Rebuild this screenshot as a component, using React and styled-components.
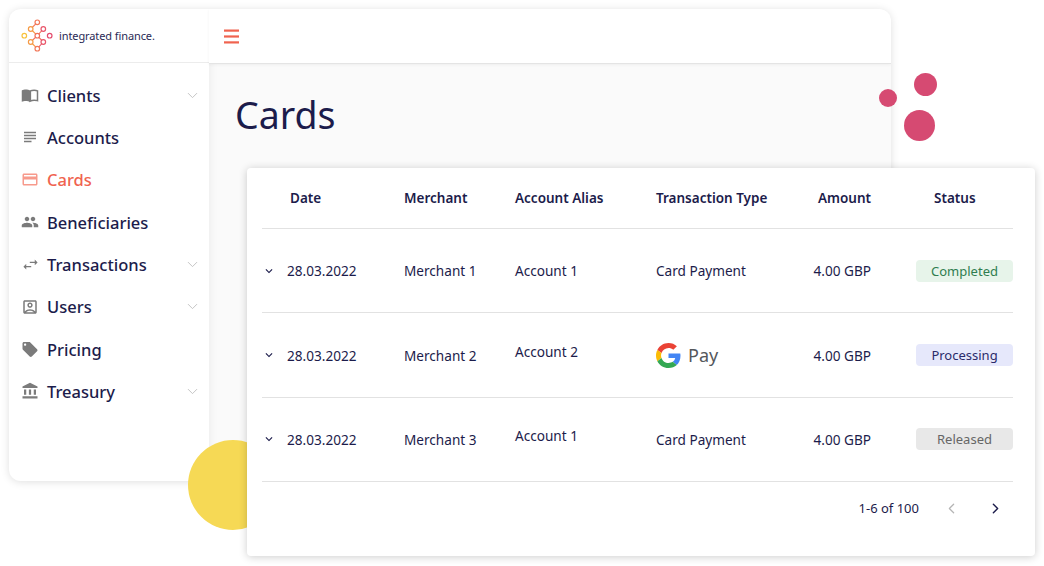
import React from 'react';
import styled, { createGlobalStyle } from 'styled-components';
import {
  MdSubject,
  MdOutlineCreditCard,
  MdPeople,
  MdOutlineAccountBox,
  MdLocalOffer,
  MdAccountBalance,
  MdKeyboardArrowDown,
} from 'react-icons/md';
import { ChevronDown, ChevronLeft, ChevronRight } from 'lucide-react';

const INK = '#1c1c4b';
const CORAL = '#f0634f';

const GlobalStyle = createGlobalStyle`
  html, body {
    margin: 0;
    background: #fff;
    font-family: "Noto Sans", "Open Sans", sans-serif;
    color: ${INK};
  }
`;

const Page = styled.div`
  position: relative;
  width: 1044px;
  height: 566px;
  padding: 9px 0 0 9px;
  box-sizing: border-box;
  overflow: hidden;
`;

const Window = styled.div`
  display: flex;
  isolation: isolate;
  width: 882px;
  height: 472px;
  border-radius: 12px;
  background: #fafafa;
  box-shadow: 0 1px 9px rgba(0, 0, 0, 0.13);
  overflow: hidden;
`;

/* sidebar */
const Sidebar = styled.aside`
  flex: 0 0 200px;
  background: #fff;
  box-shadow: 2px 0 8px rgba(0, 0, 0, 0.05);
`;

const Brand = styled.div`
  display: flex;
  align-items: center;
  gap: 6px;
  height: 53px;
  padding-left: 12px;
  border-bottom: 1px solid #ececec;
`;

const BrandName = styled.span`
  font-size: 11px;
  letter-spacing: -0.1px;
  color: #2a2a55;
`;

const Nav = styled.nav`
  padding-top: 11px;
`;

const NavRow = styled.div`
  display: grid;
  grid-template-columns: 26px 1fr 20px;
  align-items: center;
  height: 42.33px;
  padding: 0 7px 0 12px;
  font-size: 16.5px;
  font-weight: 500;
  color: ${(p) => (p.$active ? CORAL : INK)};
`;

const NavIcon = styled.span`
  display: flex;
  justify-content: center;
  width: 18px;
  color: ${(p) => (p.$active ? '#f79a8c' : '#7b7b7b')};
`;

const NavCaret = styled(ChevronDown)`
  justify-self: center;
  color: #c4c4c4;
`;

/* main area */
const Main = styled.main`
  flex: 1;
  display: flex;
  flex-direction: column;
`;

const TopBar = styled.header`
  display: flex;
  align-items: center;
  height: 54px;
  padding-left: 15px;
  background: #fff;
  border-bottom: 1px solid #e4e4e4;
  box-shadow: 0 1px 3px rgba(0, 0, 0, 0.05);
  color: ${CORAL};
`;

const Title = styled.h1`
  margin: 27px 0 0 26px;
  font-size: 37.5px;
  line-height: 48px;
  font-weight: 400;
  color: ${INK};
`;

/* decoration */
const Dot = styled.div`
  position: absolute;
  left: ${(p) => p.$x}px;
  top: ${(p) => p.$y}px;
  width: ${(p) => p.$d}px;
  height: ${(p) => p.$d}px;
  border-radius: 50%;
  background: ${(p) => p.$color};
`;

/* table card */
const TableCard = styled.section`
  position: absolute;
  left: 247px;
  top: 168px;
  width: 788px;
  height: 388px;
  box-sizing: border-box;
  padding: 0 22px 0 15px;
  background: #fff;
  border-radius: 4px;
  box-shadow: 0 1px 9px rgba(0, 0, 0, 0.2);
`;

const Grid = styled.div`
  display: grid;
  grid-template-columns: 142px 111px 141px 120px 95px 1fr;
  align-items: center;
  height: ${(p) => p.$height}px;
  border-bottom: 1px solid #e2e2e2;
  box-sizing: border-box;
`;

const Head = styled.div`
  font-size: 13.5px;
  font-weight: 600;
  text-align: ${(p) => (p.$right ? 'right' : 'left')};
  padding-left: ${(p) => p.$pad || 0}px;
`;

const Cell = styled.div`
  display: flex;
  align-items: center;
  font-size: 13.6px;
  justify-content: ${(p) => (p.$right ? 'flex-end' : 'flex-start')};
  padding-left: ${(p) => p.$pad || 0}px;
  margin-bottom: ${(p) => (p.$raised ? 8 : 0)}px;
  white-space: nowrap;
`;

const Expander = styled(MdKeyboardArrowDown)`
  flex: 0 0 14px;
  margin-right: 11px;
`;

const PayMark = styled.div`
  display: flex;
  align-items: center;
  gap: 7px;
  font-size: 18px;
  color: #54575c;
`;

const BADGES = {
  Completed: { bg: '#e7f4ea', fg: '#2f7d4f' },
  Processing: { bg: '#e6e8fb', fg: '#2b2b6a' },
  Released: { bg: '#e8e8e8', fg: '#666' },
};

const Badge = styled.span`
  width: 97px;
  height: 22px;
  line-height: 22px;
  border-radius: 4px;
  text-align: center;
  font-size: 13px;
  background: ${(p) => BADGES[p.$status].bg};
  color: ${(p) => BADGES[p.$status].fg};
`;

const Footer = styled.div`
  display: flex;
  justify-content: flex-end;
  align-items: center;
  height: 52px;
  padding-right: 9px;
  font-size: 13px;
`;

const PageInfo = styled.span`
  margin-right: 24px;
`;

const PageButton = styled.span`
  display: flex;
  margin-left: ${(p) => p.$gap || 0}px;
  color: ${(p) => (p.$disabled ? '#b5b5b5' : INK)};
`;

const Logo = () => {
  const nodes = [
    [24.3, 35.7, '#f8c23c'],
    [30.7, 29, '#f59a45'],
    [37.3, 22.3, '#f2795a'],
    [43.3, 29, '#e9566a'],
    [37.3, 35.7, '#f0705a'],
    [49.7, 35.7, '#e44d6e'],
    [30.7, 42, '#f59a45'],
    [43.3, 42, '#e9566a'],
    [37.3, 48.7, '#f2795a'],
  ];
  const links = [
    [2, 1], [1, 4], [4, 3], [4, 7], [4, 6], [6, 8], [7, 8],
  ];
  return (
    <svg width="32" height="33" viewBox="21 19 32 33">
      {links.map(([a, b]) => (
        <line
          key={`${a}-${b}`}
          x1={nodes[a][0]}
          y1={nodes[a][1]}
          x2={nodes[b][0]}
          y2={nodes[b][1]}
          stroke={nodes[a][2]}
          strokeWidth="1.1"
        />
      ))}
      {nodes.map(([x, y, c]) => (
        <circle key={`${x}-${y}`} cx={x} cy={y} r="2.3" fill="#fff" stroke={c} strokeWidth="1.2" />
      ))}
    </svg>
  );
};

const GoogleG = () => (
  <svg width="25" height="25" viewBox="0 0 48 48">
    <path fill="#EA4335" d="M24 9.5c3.5 0 6.7 1.2 9.2 3.6l6.9-6.9C35.9 2.4 30.5 0 24 0 14.6 0 6.5 5.4 2.6 13.2l8 6.2C12.5 13.6 17.8 9.5 24 9.5z" />
    <path fill="#4285F4" d="M47 24.5c0-1.6-.1-3.100-.4-4.500H24v9h12.900c-.6 3-2.200 5.500-4.700 7.200l7.700 6c4.500-4.200 7.100-10.300 7.100-17.700z" />
    <path fill="#FBBC05" d="M10.500 28.600c-.5-1.500-.8-3-.8-4.600s.3-3.100.8-4.600l-8-6.200C.9 16.400 0 20.100 0 24s.9 7.600 2.600 10.800l7.900-6.200z" />
    <path fill="#34A853" d="M24 48c6.500 0 11.900-2.100 15.900-5.800l-7.700-6c-2.200 1.400-4.900 2.300-8.200 2.300-6.200 0-11.500-4.100-13.400-9.900l-8 6.200C6.500 42.600 14.600 48 24 48z" />
  </svg>
);

const BookIcon = ({ size }) => (
  <svg width={size} height={size} viewBox="0 0 24 24">
    <path fill="currentColor" d="M12 6C10.500 4.900 8.500 4.500 6.500 4.500S2.500 4.900 1 6v15c1.500-.8 3.500-1 5.500-1s4 .4 5.500 1.500z" />
    <path fill="none" stroke="currentColor" strokeWidth="2" d="M12.500 6.500c1.500-.8 3.200-1 5-1s3.200.2 4.500.9V19.500c-1.300-.5-2.800-.6-4.500-.6s-3.500.3-5 1.100z" />
  </svg>
);

const ArrowsIcon = ({ size }) => (
  <svg width={size} height={size} viewBox="0 0 24 24" fill="currentColor">
    <path d="M11 8h7V5l4 4-4 4v-3h-7z" />
    <path d="M13 16H6v3l-4-4 4-4v3h7z" />
  </svg>
);

const BurgerIcon = () => (
  <svg width="15" height="15" viewBox="0 0 15 15" fill="currentColor">
    <rect y="0.5" width="15" height="2.2" />
    <rect y="6.4" width="15" height="2.2" />
    <rect y="12.3" width="15" height="2.2" />
  </svg>
);

const navItems = [
  { label: 'Clients', Icon: BookIcon, size: 20, caret: true },
  { label: 'Accounts', Icon: MdSubject, size: 18 },
  { label: 'Cards', Icon: MdOutlineCreditCard, size: 19, active: true },
  { label: 'Beneficiaries', Icon: MdPeople, size: 20 },
  { label: 'Transactions', Icon: ArrowsIcon, size: 17, caret: true },
  { label: 'Users', Icon: MdOutlineAccountBox, size: 18, caret: true },
  { label: 'Pricing', Icon: MdLocalOffer, size: 19 },
  { label: 'Treasury', Icon: MdAccountBalance, size: 18, caret: true },
];

const rows = [
  { merchant: 'Merchant 1', alias: 'Account 1', status: 'Completed' },
  { merchant: 'Merchant 2', alias: 'Account 2', raised: true, pay: true, status: 'Processing' },
  { merchant: 'Merchant 3', alias: 'Account 1', raised: true, status: 'Released' },
];

const App = () => (
  <Page>
    <GlobalStyle />
    <Window>
      <Sidebar>
        <Brand>
          <Logo />
          <BrandName>integrated finance.</BrandName>
        </Brand>
        <Nav>
          {navItems.map(({ label, Icon, size, caret, active }) => (
            <NavRow key={label} $active={active}>
              <NavIcon $active={active}>
                <Icon size={size} />
              </NavIcon>
              <span>{label}</span>
              {caret && <NavCaret size={17} strokeWidth={1.4} />}
            </NavRow>
          ))}
        </Nav>
      </Sidebar>
      <Main>
        <TopBar>
          <BurgerIcon />
        </TopBar>
        <Title>Cards</Title>
      </Main>
    </Window>

    <Dot $x={188} $y={440} $d={90} $color="#f6d955" />
    <Dot $x={913.5} $y={72.5} $d={23} $color="#d64a72" />
    <Dot $x={878.5} $y={89} $d={18} $color="#d64a72" />
    <Dot $x={903.5} $y={109.5} $d={31} $color="#d64a72" />

    <TableCard>
      <Grid $height={61.2}>
        <Head $pad={28}>Date</Head>
        <Head>Merchant</Head>
        <Head>Account Alias</Head>
        <Head>Transaction Type</Head>
        <Head $right>Amount</Head>
        <Head $pad={63}>Status</Head>
      </Grid>
      {rows.map((row, i) => (
        <Grid key={i} $height={84.3}>
          <Cell>
            <Expander size={14} />
            28.03.2022
          </Cell>
          <Cell>{row.merchant}</Cell>
          <Cell $raised={row.raised}>{row.alias}</Cell>
          <Cell>
            {row.pay ? (
              <PayMark>
                <GoogleG />
                Pay
              </PayMark>
            ) : (
              'Card Payment'
            )}
          </Cell>
          <Cell $right>4.00 GBP</Cell>
          <Cell $pad={45}>
            <Badge $status={row.status}>{row.status}</Badge>
          </Cell>
        </Grid>
      ))}
      <Footer>
        <PageInfo>1-6 of 100</PageInfo>
        <PageButton $disabled>
          <ChevronLeft size={17} strokeWidth={1.75} />
        </PageButton>
        <PageButton $gap={27}>
          <ChevronRight size={17} strokeWidth={2} />
        </PageButton>
      </Footer>
    </TableCard>
  </Page>
);

export default App;
